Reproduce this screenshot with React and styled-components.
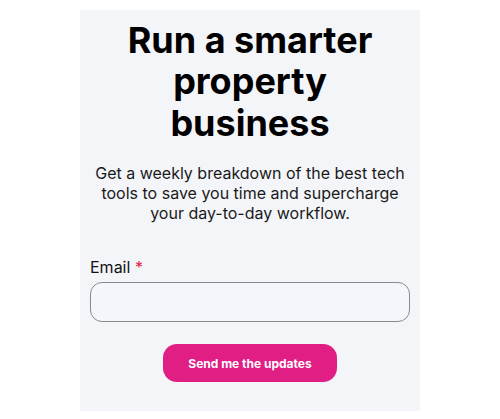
import React from 'react';
import styled, { createGlobalStyle } from 'styled-components';

const GlobalStyle = createGlobalStyle`
  body {
    margin: 0;
    background: #ffffff;
    font-family: Inter, "Noto Sans", sans-serif;
    color: #111111;
  }
`;

const Page = styled.div`
  display: flex;
  justify-content: center;
  padding-top: 10px;
`;

const Card = styled.div`
  width: 340px;
  box-sizing: border-box;
  background: #f4f5f9;
  padding: 10px 10px 29px;
  display: flex;
  flex-direction: column;
  align-items: center;
`;

const Heading = styled.h1`
  margin: 0;
  font-size: 36px;
  line-height: 41.4px;
  font-weight: 700;
  text-align: center;
  color: #000;
`;

const Intro = styled.p`
  margin: 19px 0 0;
  font-size: 16px;
  text-align: center;
  color: #1a1a1a;
  max-width: 310px;
`;

const Form = styled.form`
  align-self: stretch;
  margin-top: 34px;
  display: flex;
  flex-direction: column;
  align-items: center;
`;

const Label = styled.label`
  align-self: flex-start;
  font-size: 16px;
  color: #111;
  margin-bottom: 5px;
`;

const Required = styled.span`
  color: #e5173f;
`;

const Input = styled.input`
  align-self: stretch;
  box-sizing: border-box;
  height: 40px;
  border: 1px solid #8a8a8a;
  border-radius: 12px;
  background: #f3f6fa;
  padding: 0 12px;
  font: inherit;
`;

const Submit = styled.button`
  margin-top: 22px;
  height: 38px;
  padding: 0 25px;
  border: none;
  border-radius: 14px;
  background: #e01e84;
  color: #fff;
  font-family: Inter, sans-serif;
  font-size: 12px;
  font-weight: 700;
  cursor: pointer;
`;

export default function App() {
  return (
    <>
      <GlobalStyle />
      <Page>
        <Card>
          <Heading>
            Run a smarter
            <br />
            property
            <br />
            business
          </Heading>
          <Intro>
            Get a weekly breakdown of the best tech tools to save you time and supercharge your
            day-to-day workflow.
          </Intro>
          <Form onSubmit={(e) => e.preventDefault()}>
            <Label htmlFor="email">
              Email <Required>*</Required>
            </Label>
            <Input id="email" type="email" />
            <Submit type="submit">Send me the updates</Submit>
          </Form>
        </Card>
      </Page>
    </>
  );
}
